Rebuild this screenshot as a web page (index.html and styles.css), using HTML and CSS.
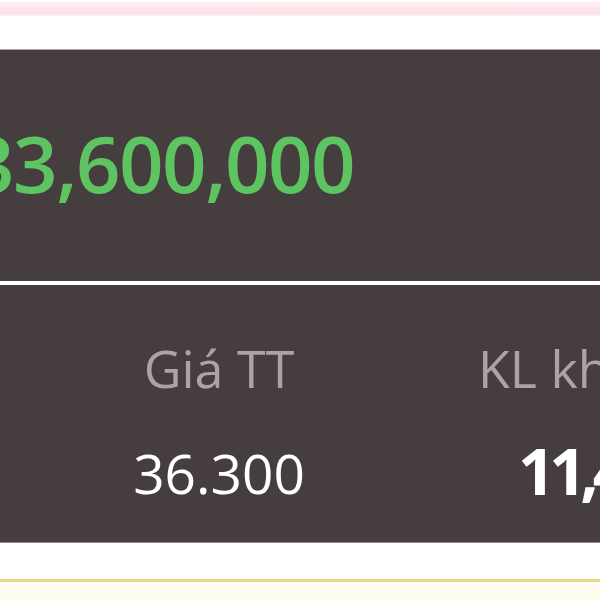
FILE: index.html
```html
<!DOCTYPE html>
<html lang="vi">
<head>
    <meta charset="UTF-8">
    <meta name="viewport" content="width=device-width, initial-scale=1.0">
    <title>Giá trị giao dịch</title>
    <link rel="stylesheet" href="styles.css">
</head>
<body>
    <div class="notice-bar"></div>

    <section class="summary-panel">
        <div class="total-value">33,600,000</div>
    </section>

    <section class="quote-panel">
        <div class="quote-col">
            <div class="quote-label">Giá TT</div>
            <div class="quote-value">36.300</div>
        </div>
        <div class="quote-col quote-col-left">
            <div class="quote-label">KL khớp</div>
            <div class="quote-value quote-value-big">11,400</div>
        </div>
    </section>

    <div class="footer-bar"></div>
</body>
</html>
```

FILE: styles.css
```css
:root {
    --panel: #463d3e;
    --green: #5ec462;
    --label: #aaa4a4;
    --white: #ffffff;
    --pink: #fce8ec;
    --yellow-line: #e6d88a;
    --yellow-bg: #fefcee;
}

* {
    margin: 0;
    padding: 0;
    box-sizing: border-box;
}

body {
    background-color: var(--white);
    font-family: 'Open Sans', 'Noto Sans', sans-serif;
    overflow: hidden;
    height: 600px;
}

.notice-bar {
    height: 14px;
    margin-top: 2px;
    background: linear-gradient(to bottom, #fdf0f2, var(--pink) 40%, #f9e1e6 80%, #fdf3f5);
    margin-bottom: 33px;
}

.summary-panel {
    height: 232px;
    background-color: var(--panel);
    border-top: 1px solid #a9a4a4;
    padding-top: 74px;
}

.total-value {
    color: var(--green);
    font-size: 78px;
    font-weight: 650;
    line-height: 1;
    letter-spacing: -1.5px;
    margin-left: -30px;
    white-space: nowrap;
}

.quote-panel {
    height: 258px;
    margin-top: 4px;
    background-color: var(--panel);
    border-bottom: 1px solid #8f8a8a;
    display: flex;
    padding-top: 57px;
    overflow: hidden;
}

.quote-col {
    flex: 0 0 356px;
    margin-left: 41px;
    text-align: center;
    white-space: nowrap;
}

.quote-col-left {
    margin-left: 0;
    text-align: left;
    padding-left: 81px;
}

.quote-label {
    color: var(--label);
    font-size: 52px;
    line-height: 1;
}

.quote-value {
    color: var(--white);
    font-size: 55px;
    font-weight: 500;
    line-height: 1;
    margin-top: 51px;
}

.quote-value-big {
    font-size: 65px;
    font-weight: 700;
    letter-spacing: -6px;
    margin-top: 44px;
    padding-left: 40px;
}

.footer-bar {
    height: 21px;
    margin-top: 36px;
    border-top: 3px solid var(--yellow-line);
    background-color: var(--yellow-bg);
}
```
